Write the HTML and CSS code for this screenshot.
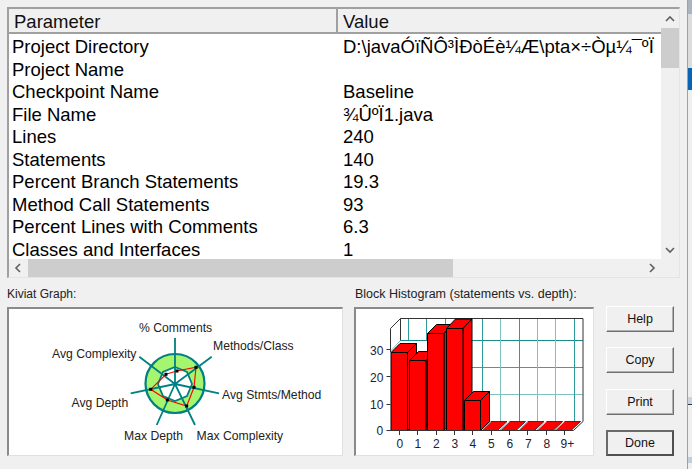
FILE: index.html
```html
<!DOCTYPE html>
<html lang="en">
<head>
<meta charset="utf-8">
<title>Metrics Details</title>
<link rel="stylesheet" href="styles.css">
</head>
<body>
<div class="window">
  <section class="table">
    <div class="table-main">
      <div class="columns">
        <div class="head">
          <div class="h param">Parameter</div>
          <div class="h value">Value</div>
        </div>
        <div class="rows">
          <div class="row"><span class="k">Project Directory</span><span class="v">D:\javaÓïÑÔ³ÌÐòÉè¼Æ\pta×÷Òµ¼¯ºÏ</span></div>
          <div class="row"><span class="k">Project Name</span><span class="v"></span></div>
          <div class="row"><span class="k">Checkpoint Name</span><span class="v">Baseline</span></div>
          <div class="row"><span class="k">File Name</span><span class="v">¾ÛºÏ1.java</span></div>
          <div class="row"><span class="k">Lines</span><span class="v">240</span></div>
          <div class="row"><span class="k">Statements</span><span class="v">140</span></div>
          <div class="row"><span class="k">Percent Branch Statements</span><span class="v">19.3</span></div>
          <div class="row"><span class="k">Method Call Statements</span><span class="v">93</span></div>
          <div class="row"><span class="k">Percent Lines with Comments</span><span class="v">6.3</span></div>
          <div class="row"><span class="k">Classes and Interfaces</span><span class="v">1</span></div>
        </div>
      </div>
      <div class="vbar">
        <svg class="arrow" width="18" height="18" viewBox="0 0 18 18"><path d="M5 11l4-4 4 4" fill="none" stroke="#606060" stroke-width="1.6"/></svg>
        <div class="vtrack"><div class="vthumb"></div></div>
        <svg class="arrow" width="18" height="18" viewBox="0 0 18 18"><path d="M5 7l4 4 4-4" fill="none" stroke="#606060" stroke-width="1.6"/></svg>
      </div>
    </div>
    <div class="hbar">
      <svg class="arrow arrow-left" width="18" height="18" viewBox="0 0 18 18"><path d="M11 5l-4 4 4 4" fill="none" stroke="#606060" stroke-width="1.6"/></svg>
      <div class="htrack"><div class="hthumb"></div></div>
      <svg class="arrow" width="18" height="18" viewBox="0 0 18 18"><path d="M7 5l4 4-4 4" fill="none" stroke="#606060" stroke-width="1.6"/></svg>
    </div>
  </section>

  <section class="lower">
    <div class="panel kiviat-panel">
      <div class="label">Kiviat Graph:</div>
      <div class="frame kiviat">
        <svg width="333" height="146" viewBox="9 309 333 146">
          <g fill="none" stroke="#008080">
            <circle cx="175" cy="383.500" r="29.500" fill="#a6f56f" stroke-width="2.2"/>
            <polygon points="175,367 187,372 192,384 187,396 175,401 163,396 158,384 163,372" fill="#fff" stroke-width="1.8"/>
            <path stroke-width="1.8" d="M175 384V338M175 384L211.700 356.700M175 384L219 393.300M175 384L195 425M175 384L156.700 425M175 384L130.700 393.300M175 384L139.300 356.700"/>
          </g>
          <polygon points="176.700,371 196,367.300 194,387.300 186.700,406 167.300,400 150.700,389.300 166,374.300" fill="none" stroke="#f00" stroke-width="1.1"/>
          <g fill="#000">
            <rect x="175.500" y="369.500" width="3" height="3"/><rect x="194.500" y="365.800" width="3" height="3"/><rect x="192.500" y="385.800" width="3" height="3"/><rect x="185.200" y="404.500" width="3" height="3"/><rect x="165.800" y="398.500" width="3" height="3"/><rect x="149.200" y="387.800" width="3" height="3"/><rect x="164.500" y="372.800" width="3" height="3"/>
          </g>
          <g class="chart-text">
            <text x="139" y="332">% Comments</text>
            <text x="213" y="350">Methods/Class</text>
            <text x="222" y="399">Avg Stmts/Method</text>
            <text x="196.500" y="440">Max Complexity</text>
            <text x="124" y="440">Max Depth</text>
            <text x="71.500" y="407">Avg Depth</text>
            <text x="52" y="358">Avg Complexity</text>
          </g>
        </svg>
      </div>
    </div>
    <div class="panel hist-panel">
      <div class="label label-wide">Block Histogram (statements vs. depth):</div>
      <div class="frame hist">
        <svg width="237" height="146" viewBox="356 309 237 146">
          <g fill="none" stroke-width="1">
            <path stroke="#1a8c8c" d="M400 340.500H583"/>
            <path stroke="#3f9f9f" d="M400 367.500H583"/>
            <path stroke="#7fc0c0" d="M400 394.500H583"/>
            <path stroke="#7fc0c0" d="M390.500 351L400 341"/>
            <path stroke="#2f9a9a" d="M408.500 319V340M426.500 319V340M445.500 319V340M463.500 319V340"/>
            <path stroke="#2f9a9a" d="M482.500 319V422M519.500 319V422M574.500 319V422"/>
            <path stroke="#7fc0c0" d="M500.500 319V422M537.500 319V422M555.500 319V422"/>
          </g>
          <path d="M390.500 328.500L400.500 318.500H583M583 318.500V421.500L573.500 430.500M400.500 318.500V340M390.500 328.500V352" fill="none" stroke="#333" stroke-width="1"/>
          <g stroke="#000" stroke-width="1" stroke-linejoin="round" fill="#f00">
            <path d="M391 352.500l9-9h16.500l-9 9z"/><path d="M407.500 352.500l9-9v78l-9 9z"/><rect x="391" y="352.500" width="16.500" height="78"/>
            <path d="M409.500 360.500l9-9h16.500l-9 9z"/><path d="M426 360.500l9-9v70l-9 9z"/><rect x="409.500" y="360.500" width="16.500" height="70"/>
            <path d="M427.500 333.500l9-9h16.500l-9 9z"/><path d="M444 333.500l9-9v97l-9 9z"/><rect x="427.500" y="333.500" width="16.500" height="97"/>
            <path d="M446.500 328.500l9-9.500h16.500l-9 9.500z"/><path d="M463 328.500l9-9.500v102.500l-9 9z"/><rect x="446.500" y="328.500" width="16.500" height="102"/>
            <path d="M464.500 400.500l9-9h16l-9 9z"/><path d="M480.500 400.500l9-9v30l-9 9z"/><rect x="464.500" y="400.500" width="16" height="30"/>
          </g>
          <g fill="#f00" stroke="#333" stroke-width="1" stroke-linejoin="round">
            <path d="M481.500 430.500l9.500-9h16l-9.500 9zM500 430.500l9.500-9h16l-9.500 9zM518.500 430.500l9.500-9h16l-9.500 9zM537 430.500l9.500-9h16l-9.500 9zM555 430.500l9.500-9h16l-9.500 9z"/>
          </g>
          <path d="M482 430L491 421.500M500.500 430L509.500 421.500M519 430L528 421.500M537.500 430L546.500 421.500M555.500 430L564.500 421.500" stroke="#c8c8c8" stroke-width="1" fill="none"/>
          <path d="M390 430.500H573.500" stroke="#333" stroke-width="1"/>
          <path d="M386.500 430.500h4M386.500 404.500h4M386.500 376.500h4M386.500 349.500h4M399.500 430v5M417.500 430v5M436.500 430v5M454.500 430v5M472.500 430v5M491.500 430v5M509.500 430v5M527.500 430v5M546.500 430v5M564.500 430v5" stroke="#333" fill="none"/>
          <g class="chart-text axis">
            <text x="376.500" y="434.500">0</text><text x="370" y="409">10</text><text x="370" y="382">20</text><text x="370" y="354.500">30</text>
            <text x="396.500" y="448">0</text><text x="414.500" y="448">1</text><text x="433" y="448">2</text><text x="451.500" y="448">3</text><text x="469.500" y="448">4</text><text x="488" y="448">5</text><text x="506.500" y="448">6</text><text x="525" y="448">7</text><text x="543.500" y="448">8</text><text x="560.500" y="448">9+</text>
          </g>
        </svg>
      </div>
    </div>
    <div class="buttons">
      <button class="btn">Help</button>
      <button class="btn">Copy</button>
      <button class="btn">Print</button>
      <button class="btn default">Done</button>
    </div>
  </section>
</div>
<aside class="behind">
  <div class="seg seg-a"></div>
  <div class="seg seg-b"></div>
  <div class="seg seg-c"></div>
  <div class="seg seg-d"></div>
  <div class="seg seg-e"></div>
  <div class="seg seg-f"></div>
  <div class="seg seg-d2"></div>
  <div class="seg seg-e2"></div>
  <div class="seg seg-d3"></div>
</aside>
</body>
</html>
```
FILE: styles.css
```css
html, body {
  margin: 0;
  padding: 0;
  height: 100%;
  overflow: hidden;
}
body {
  width: 692px;
  height: 469px;
  background: #f0f0f0;
  font-family: "Liberation Sans", Arial, sans-serif;
  color: #000;
  display: flex;
}
.window {
  box-sizing: border-box;
  width: 688px;
  height: 469px;
  padding: 7px 0 0 7px;
  border-right: 1px solid #a0a0a0;
  display: flex;
  flex-direction: column;
  flex: none;
}
.behind {
  width: 4px;
  height: 469px;
  display: flex;
  flex-direction: column;
  flex: none;
}
.seg { flex: none; }
.seg-a { height: 14px; background: #aab4c0; }
.seg-b { height: 54px; background: #dcdcdc; }
.seg-c { height: 22px; background: #0a64b4; }
.seg-d { height: 307px; background: #efefef; }
.seg-e { height: 7px; background: #c8d4e0; border-bottom: 1px solid #333; }
.seg-f { height: 0; }
.seg-d2 { height: 52px; background: #efefef; }
.seg-e2 { height: 6px; background: #c0cfdc; }
.seg-d3 { height: 6px; background: #efefef; }
.table {
  box-sizing: border-box;
  width: 673px;
  height: 271px;
  border-top: 2px solid #a0a0a0;
  border-left: 2px solid #a0a0a0;
  border-right: 1px solid #e4e4e4;
  border-bottom: 1px solid #e4e4e4;
  display: flex;
  flex-direction: column;
  flex: none;
}
.table-main {
  display: flex;
  height: 250px;
  flex: none;
}
.columns {
  width: 652px;
  height: 250px;
  overflow: hidden;
  background: #fff;
  flex: none;
}
.head {
  display: flex;
  height: 25px;
  box-sizing: border-box;
  background: #f0f0f0;
  border-bottom: 2px solid #a0a0a0;
}
.h {
  font-size: 18.500px;
  line-height: 26px;
  height: 23px;
  padding-left: 5px;
  box-sizing: border-box;
  color: #111;
}
.param {
  width: 329px;
  border-right: 2px solid #a0a0a0;
}
.value { flex: 1; }
.rows {
  padding-top: 2px;
}
.row {
  display: flex;
  height: 22.550px;
  font-size: 18.500px;
  line-height: 22px;
  white-space: nowrap;
}
.k {
  width: 331px;
  padding-left: 3px;
  box-sizing: border-box;
  flex: none;
}
.v {
  padding-left: 3px;
}
.vbar {
  width: 19px;
  height: 250px;
  padding-top: 1px;
  box-sizing: border-box;
  display: flex;
  flex-direction: column;
  align-items: flex-start;
  flex: none;
}
.arrow { flex: none; }
.vtrack {
  flex: 1;
  width: 18px;
}
.vthumb {
  height: 40px;
  width: 18px;
  background: #cdcdcd;
}
.hbar {
  display: flex;
  height: 18px;
  flex: none;
  align-items: center;
}
.arrow-left { margin-right: 1px; }
.htrack {
  width: 615px;
  height: 18px;
  flex: none;
}
.hthumb {
  width: 425px;
  height: 18px;
  background: #cdcdcd;
}
.lower {
  display: flex;
  margin-top: 8px;
  flex: none;
}
.panel { flex: none; }
.label {
  font-size: 12px;
  line-height: 16px;
  height: 21px;
  color: #222;
}
.label-wide {
  font-size: 12.500px;
  padding-left: 1px;
}
.kiviat-panel { width: 347px; }
.hist-panel { width: 252px; }
.frame {
  box-sizing: border-box;
  height: 149px;
  background: #fff;
  border-top: 2px solid #8a8a8a;
  border-left: 2px solid #8a8a8a;
  border-right: 1px solid #e0e0e0;
  border-bottom: 1px solid #e0e0e0;
  overflow: hidden;
}
.frame svg { display: block; }
.kiviat { width: 336px; }
.hist { width: 240px; }
.chart-text text {
  font-family: "Liberation Sans", Arial, sans-serif;
  font-size: 12.200px;
  fill: #222;
}
.axis text {
  font-size: 12px;
  fill: #223;
}
.buttons {
  display: flex;
  flex-direction: column;
  gap: 15.330px;
  padding-top: 20px;
  flex: none;
}
.btn {
  box-sizing: border-box;
  width: 68px;
  height: 26px;
  background: #f0f0f0;
  border: 1px solid;
  border-color: #fff #6f6f6f #6f6f6f #fff;
  box-shadow: inset -1px -1px 0 #b0b0b0;
  font: 12.500px "Liberation Sans", Arial, sans-serif;
  color: #111;
  padding: 0;
}
.btn.default {
  border: 2px solid;
  border-color: #6a6a6a #505050 #505050 #6a6a6a;
  box-shadow: none;
}
```
